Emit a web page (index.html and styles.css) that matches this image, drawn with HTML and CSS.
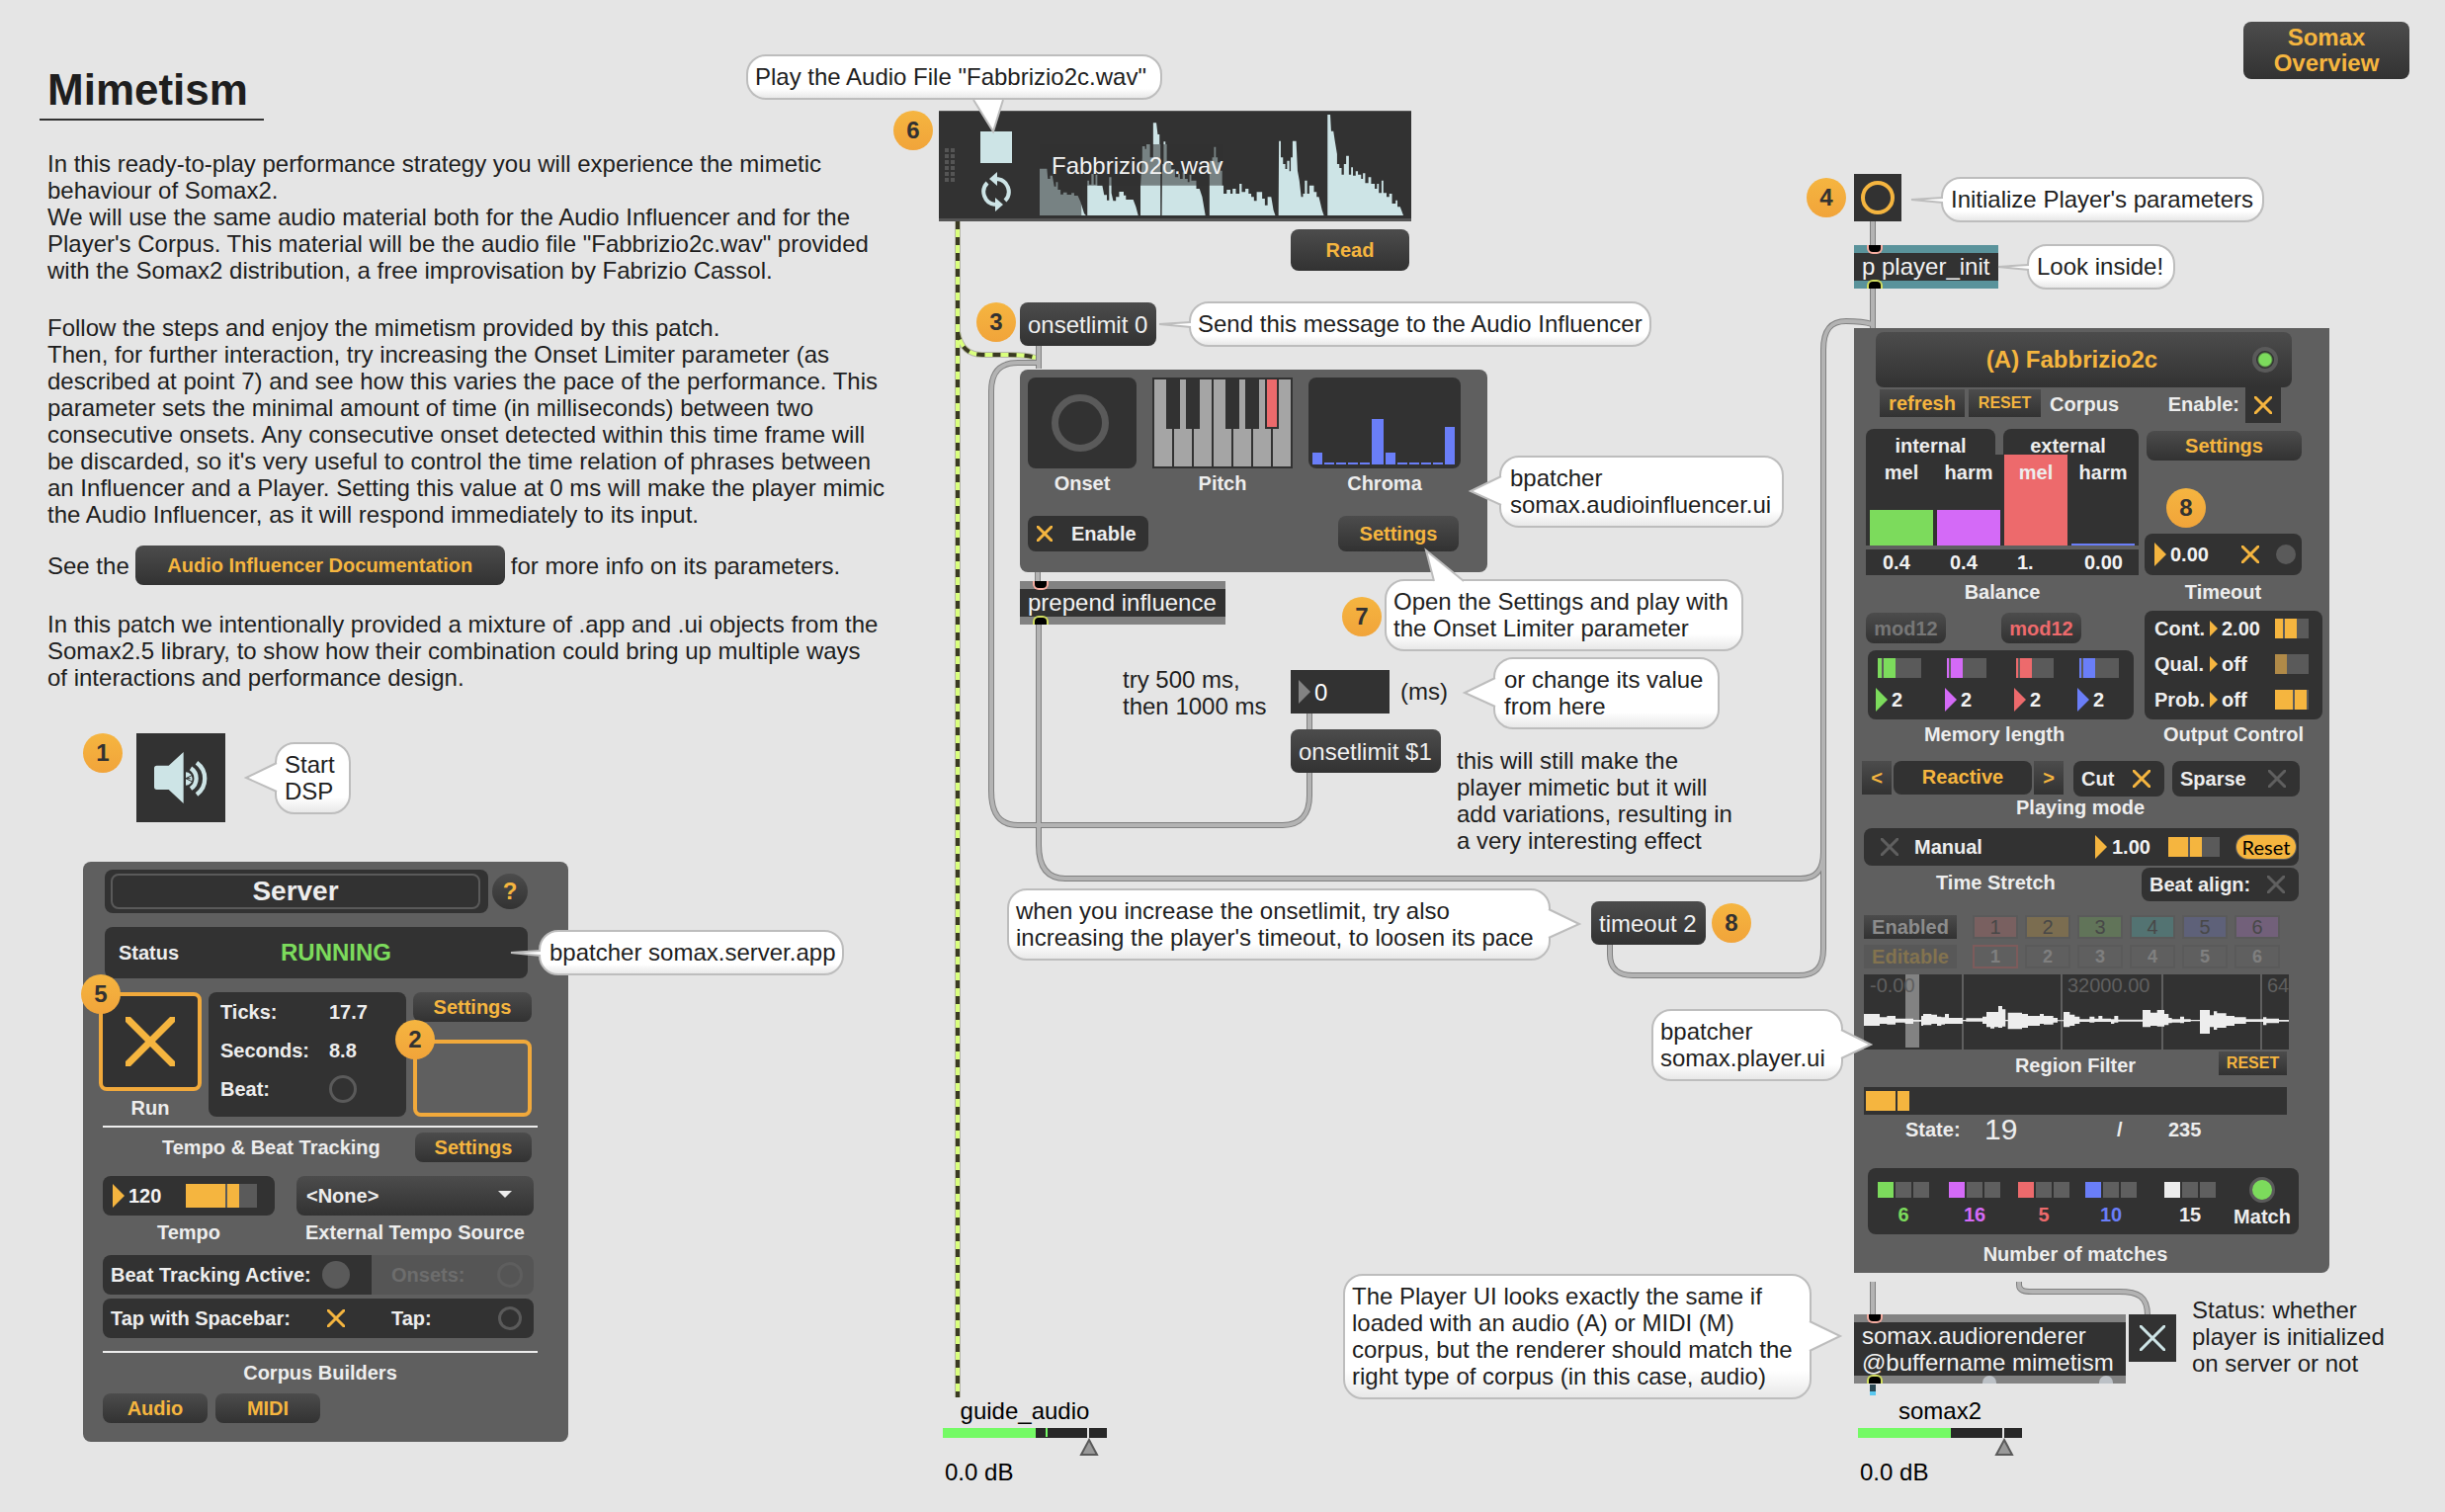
FILE: index.html
```html
<!DOCTYPE html>
<html lang="en">
<head>
<meta charset="utf-8">
<title>Mimetism</title>
<link rel="stylesheet" href="styles.css">
</head>
<body>
<main class="patch">

  <section class="intro">
    <h1>Mimetism</h1>
    <p>In this ready-to-play performance strategy you will experience the mimetic behaviour of Somax2.<br>
    We will use the same audio material both for the Audio Influencer and for the Player's Corpus. This material will be the audio file "Fabbrizio2c.wav" provided with the Somax2 distribution, a free improvisation by Fabrizio Cassol.</p>
    <p>Follow the steps and enjoy the mimetism provided by this patch.<br>
    Then, for further interaction, try increasing the Onset Limiter parameter (as described at point 7) and see how this varies the pace of the performance. This parameter sets the minimal amount of time (in milliseconds) between two consecutive onsets. Any consecutive onset detected within this time frame will be discarded, so it's very useful to control the time relation of phrases between an Influencer and a Player. Setting this value at 0 ms will make the player mimic the Audio Influencer, as it will respond immediately to its input.</p>
    <div class="see">See the <button class="btn doc">Audio Influencer Documentation</button> for more info on its parameters.</div>
    <p>In this patch we intentionally provided a mixture of .app and .ui objects from the Somax2.5 library, to show how their combination could bring up multiple ways<br>of interactions and performance design.</p>
  </section>

  <button class="node btn overview">Somax<br>Overview</button>

  <!-- patch cords -->
  <svg class="cords" aria-hidden="true">
    <defs>
      <path id="wires" d="M1051 350V373 M1051 367H1030C1012 367 1003 376 1003 396V800C1003 824 1012 835 1030 835H1298C1316 835 1325 824 1325 805V782 M1325 722V738 M1050 579V589 M1051 632V855C1051 878 1060 889 1078 889H1822C1838 889 1845 880 1845 862V354C1845 334 1852 325 1868 325C1880 325 1888 326 1894 328 M1629 956V966C1629 980 1638 987 1652 987H1820C1838 987 1845 978 1845 960V850 M1895 224V249 M1895 292V333 M1895 1297V1331 M2043 1297V1300C2043 1306 2048 1307 2056 1307H2144C2164 1307 2173 1312 2173 1331"/>
      <path id="signal" d="M969 224V1414 M969 336C972 352 980 359 994 359H1020C1034 359 1042 360 1048 362"/>
    </defs>
    <use href="#signal" class="signal-edge"/>
    <use href="#signal" class="signal-core"/>
    <use href="#signal" class="signal-dash"/>
    <use href="#wires" class="wire-edge"/>
    <use href="#wires" class="wire-core"/>
    <path d="M1895 1401V1408" stroke="#2c4954" stroke-width="6"/>
    <path d="M1895 1408V1412" stroke="#5ac8f0" stroke-width="6"/>
  </svg>

  <!-- DSP -->
  <button class="node dsp" aria-label="Start DSP">
    <svg viewBox="0 0 270 270" width="90" height="90">
      <g fill="#cde4e6"><path d="M62 98H98L143 57V213L98 171H62Q54 171 54 163V106Q54 98 62 98Z"/><path d="M150 118A20 20 0 0 1 150 158Z"/></g>
      <g fill="none" stroke="#cde4e6" stroke-width="13"><path d="M165 106A37 37 0 0 1 165 168" /><path d="M183 89A60 60 0 0 1 183 186"/></g>
      <path d="M150 137L168 128M150 137L168 146M150 137H164" stroke="#323232" stroke-width="3"/>
    </svg>
  </button>
  <div class="node bubble b-dsp">Start<br>DSP<svg class="tail"><path d="M2 21L-29 36L2 50"/></svg></div>

  <!-- server -->
  <section class="node panel server">
    <div class="srv-head"><div class="srv-title"><h2>Server</h2></div><button class="btn help">?</button></div>
    <div class="dark srv-status"><span>Status</span><strong>RUNNING</strong></div>
    <div class="srv-run">
      <label class="run"><span class="run-frame"><input type="checkbox" class="x run-x" checked></span>Run</label>
      <dl class="dark info"><dt>Ticks:</dt><dd>17.7</dd><dt>Seconds:</dt><dd>8.8</dd><dt>Beat:</dt><dd><i class="ring r28"></i></dd></dl>
      <div class="srv-side"><button class="btn">Settings</button><div class="slot"></div></div>
    </div>
    <hr>
    <div class="srv-tempo-head"><span>Tempo &amp; Beat Tracking</span><button class="btn">Settings</button></div>
    <div class="srv-tempo">
      <div class="dark tempo"><i class="tri"></i><input class="num" id="tempo" value="120"><input type="range" class="slider tempo-slider" aria-label="Tempo slider" min="0" max="60" value="42" style="--fill:40px"></div>
      <div class="pick"><select id="source"><option>&lt;None&gt;</option></select></div>
      <label for="tempo">Tempo</label><label for="source">External Tempo Source</label>
    </div>
    <div class="beat-row beat-on"><span>Beat Tracking Active:</span><i class="dot r28"></i><span class="second">Onsets:</span><i class="ring r26"></i></div>
    <div class="beat-row"><label for="tapspace">Tap with Spacebar:</label><input type="checkbox" class="x" id="tapspace" checked><span class="second">Tap:</span><button class="ring r24" aria-label="Tap"></button></div>
    <hr class="hr2">
    <h3>Corpus Builders</h3>
    <div class="builders"><button class="btn">Audio</button><button class="btn">MIDI</button></div>
  </section>
  <div class="node bubble b-server">bpatcher somax.server.app<svg class="tail"><path d="M2 21L-28 23L2 26"/></svg></div>

  <!-- audio file player -->
  <section class="node playlist">
    <div class="grip"><i></i><i></i><i></i><i></i><i></i><i></i><i></i><i></i><i></i><i></i><i></i><i></i></div>
    <div class="transport">
      <button class="stop" aria-label="Stop"></button>
      <button class="loop" aria-label="Loop"><svg width="32" height="40" viewBox="0 0 32 40"><g fill="none" stroke="#cde4e6" stroke-width="4"><path d="M17 7A13 13 0 0 1 25 29"/><path d="M15 33A13 13 0 0 1 7 11"/></g><path fill="#cde4e6" d="M9 7L17 0V14ZM23 33L15 26V40Z"/></svg></button>
    </div>
    <div class="clip">
      <svg viewBox="0 0 801 306" preserveAspectRatio="none">
        <path fill="#cde4e6" d="M0 306V164H16L18 195H23V185H28L32 218H36V205H40V228H46V242H52V236H60V243H70V238H76V246H84L90 265L98 300L102 306ZM105 306V200H109V212H114V180H119V212H123V182H127V215H138L142 244H148V260H153V190H158V238L162 262H168V250H175V234H185V245H190V258H206L212 280L217 306ZM222 306V220L226 130V96H232V104H235V90H243V130H250V25H257L260 60H264V90H266V306ZM269 306L270 150H273V82H277V90H280V140H286V150H290V165H298V190H305V180H309V195H315V175H320V195H326V205H330V182H334V200H345V225H352L358 250L365 306ZM374 306V140H380V130H384V98H388V130H392V145H398V170H402V215H405V240H412V228H420V240H425V225H432V240H440V210H445V235H453V225H460V240H466V250H472V262H478V235H490V255H496V275H502V250H510L515 290L519 306ZM526 306L527 80H531V130H536V150H541V165H545V140H550V172H553V130H557V80H565L568 170L572 200L576 250H580V240H584V200H589V240H594V215H604V235H610V250H615L622 290L626 306ZM634 306V0H640L642 50H647L650 78L655 120V150H660V162H665V182H670V150H675V125H681V182H686V160H690V185H696V172H701V182H708V195H712V178H717V208H724V190H730V210H738V225H743V210H747V238H753V200H757V238H764V250H770V240H776V270H784V260H788V280H794L801 306Z"/>
        <path fill="#323232" fill-opacity=".55" d="M0 90H403V215H92V306H0Z"/>
      </svg>
      <span>Fabbrizio2c.wav</span>
    </div>
  </section>
  <div class="node bubble b-play">Play the Audio File "Fabbrizio2c.wav"<svg class="tail"><path d="M230 46L250 78L260 46"/></svg></div>
  <button class="node btn read">Read</button>

  <button class="node msg m-onset0">onsetlimit 0</button>
  <div class="node bubble b-send">Send this message to the Audio Influencer<svg class="tail"><path d="M2 21L-30 23L2 26"/></svg></div>

  <!-- audio influencer -->
  <section class="node panel influencer">
    <div class="inf-views">
      <figure><div class="view dark"><i class="big-ring"></i></div><figcaption>Onset</figcaption></figure>
      <figure><svg class="keys" width="142" height="92" viewBox="0 0 142 92"><rect width="142" height="92" fill="#323232"/><path fill="#a5a5a5" d="M2 2h18v88H2zM22 2h18v88H22zM42 2h18v88H42zM62 2h18v88H62zM82 2h18v88H82zM102 2h18v88H102zM122 2h18v88H122z"/><path fill="#323232" d="M14 2h14v50H14zM34 2h14v50H34zM74 2h14v50H74zM94 2h14v50H94zM114 2h14v50H114z"/><rect x="116" y="2" width="10" height="48" fill="#ed6a6c"/></svg><figcaption>Pitch</figcaption></figure>
      <figure><div class="view dark chroma"><i style="height:12px"></i><i style="height:2px"></i><i style="height:2px"></i><i style="height:2px"></i><i style="height:2px"></i><i style="height:46px"></i><i style="height:12px"></i><i style="height:2px"></i><i style="height:2px"></i><i style="height:2px"></i><i style="height:2px"></i><i style="height:38px"></i></div><figcaption>Chroma</figcaption></figure>
    </div>
    <div class="inf-foot"><label class="dark"><input type="checkbox" class="x" checked>Enable</label><button class="btn">Settings</button></div>
  </section>
  <div class="node bubble b-inf">bpatcher<br>somax.audioinfluencer.ui<svg class="tail"><path d="M2 21L-29 36L2 50"/></svg></div>

  <div class="node object o-prepend">prepend influence</div>
  <div class="node bubble b-open">Open the Settings and play with<br>the Onset Limiter parameter<svg class="tail"><path d="M50 2L42 -29L80 2"/></svg></div>

  <p class="node comment c-try">try 500 ms,<br>then 1000 ms</p>
  <label class="node numbox"><i class="tri"></i><input value="0" aria-label="Onset limit in milliseconds"></label>
  <p class="node comment c-ms">(ms)</p>
  <div class="node bubble b-change">or change its value<br>from here<svg class="tail"><path d="M2 21L-29 36L2 50"/></svg></div>
  <button class="node msg m-onset1">onsetlimit $1</button>
  <p class="node comment c-still">this will still make the<br>player mimetic but it will<br>add variations, resulting in<br>a very interesting effect</p>
  <div class="node bubble b-when">when you increase the onsetlimit, try also<br>increasing the player's timeout, to loosen its pace<svg class="tail"><path d="M548 21L579 36L548 50"/></svg></div>
  <button class="node msg m-timeout">timeout 2</button>

  <!-- player init -->
  <button class="node bang" aria-label="Initialize"><i></i></button>
  <div class="node bubble b-init">Initialize Player's parameters<svg class="tail"><path d="M2 21L-30 23L2 26"/></svg></div>
  <div class="node object teal o-init">p player_init</div>
  <div class="node bubble b-look">Look inside!<svg class="tail"><path d="M2 21L-29 23L2 26"/></svg></div>

  <!-- player -->
  <section class="node panel player">
    <div class="pl-head"><button class="btn">(A) Fabbrizio2c</button><i class="led"></i></div>
    <div class="pl-corpus"><button class="btn flat refresh">refresh</button><button class="btn flat reset">RESET</button><span>Corpus</span><label>Enable: <span class="toggle-box"><input type="checkbox" class="x" checked></span></label></div>
    <div class="pl-main">
      <div class="pl-left">
        <div class="tabs2"><span>internal</span><span>external</span></div>
        <div class="balance">
          <div class="bars"><i class="green" style="height:36px"></i><i class="purple" style="height:36px"></i><i class="red" style="height:92px"></i><i class="blue" style="height:2px"></i></div>
          <div class="bar-names"><span>mel</span><span>harm</span><span>mel</span><span>harm</span></div>
        </div>
        <div class="values"><input value="0.4" aria-label="Internal melodic balance"><input value="0.4" aria-label="Internal harmonic balance"><input value="1." aria-label="External melodic balance"><input value="0.00" aria-label="External harmonic balance"></div>
        <h3 class="cap-balance">Balance</h3>
        <div class="mods"><button class="btn off">mod12</button><button class="btn on">mod12</button></div>
        <div class="dark memory">
          <div class="green"><input type="range" class="slider" aria-label="Memory 1" min="0" max="32" value="6" style="--fill:4px;width:44px"><span><i class="tri"></i><input class="num" value="2" aria-label="Memory 1 value"></span></div>
          <div class="purple"><input type="range" class="slider" aria-label="Memory 2" min="0" max="28" value="4" style="--fill:2px;width:40px"><span><i class="tri"></i><input class="num" value="2" aria-label="Memory 2 value"></span></div>
          <div class="red"><input type="range" class="slider" aria-label="Memory 3" min="0" max="26" value="4" style="--fill:2px;width:38px"><span><i class="tri"></i><input class="num" value="2" aria-label="Memory 3 value"></span></div>
          <div class="blue"><input type="range" class="slider" aria-label="Memory 4" min="0" max="28" value="4" style="--fill:2px;width:40px"><span><i class="tri"></i><input class="num" value="2" aria-label="Memory 4 value"></span></div>
        </div>
        <h3 class="cap-memory">Memory length</h3>
      </div>
      <div class="pl-right">
        <button class="btn">Settings</button>
        <div class="dark timeout"><i class="tri"></i><input class="num" id="timeout" value="0.00"><input type="checkbox" class="x" aria-label="Timeout on" checked><i class="dot r20"></i></div>
        <label class="cap" for="timeout">Timeout</label>
        <div class="dark output">
          <div><label for="cont">Cont.</label><i class="tri"></i><input class="num" id="cont" value="2.00"><input type="range" class="slider" aria-label="Continuity" min="0" max="22" value="10" style="--fill:8px;width:34px"></div>
          <div><label for="qual">Qual.</label><i class="tri"></i><input class="num" id="qual" value="off"><input type="range" class="slider dim" aria-label="Quality" min="0" max="22" value="0" style="--fill:0px;width:34px"></div>
          <div><label for="prob">Prob.</label><i class="tri"></i><input class="num" id="prob" value="off"><input type="range" class="slider" aria-label="Probability" min="0" max="22" value="20" style="--fill:18px;width:34px"></div>
        </div>
        <h3 class="cap-memory">Output Control</h3>
      </div>
    </div>
    <div class="mode"><button class="btn flat step-btn">&lt;</button><output>Reactive</output><button class="btn flat step-btn">&gt;</button><label class="dark cut">Cut<input type="checkbox" class="x" checked></label><label class="dark sparse">Sparse<input type="checkbox" class="x"></label></div>
    <h3 class="cap-wide cap-mode">Playing mode</h3>
    <div class="dark stretch"><label><input type="checkbox" class="x">Manual</label><i class="tri"></i><input class="num" id="stretch" value="1.00"><input type="range" class="slider" aria-label="Time stretch slider" min="0" max="40" value="22" style="--fill:20px;width:52px"><button class="pill">Reset</button></div>
    <div class="align"><label for="stretch">Time Stretch</label><label class="dark">Beat align:<input type="checkbox" class="x"></label></div>
    <div class="regions"><button class="btn flat word">Enabled</button><button class="c1">1</button><button class="c2">2</button><button class="c3">3</button><button class="c4">4</button><button class="c5">5</button><button class="c6">6</button></div>
    <div class="regions edit"><button class="word">Editable</button><button class="sel">1</button><button>2</button><button>3</button><button>4</button><button>5</button><button>6</button></div>
    <div class="wave">
      <svg viewBox="0 0 1290 228" preserveAspectRatio="none">
        <path fill="#5f5f5f" d="M297 0h6v228h-6zM597 0h6v228h-6zM903 0h6v228h-6zM1203 0h6v228h-6z"/>
        <path fill="#828282" d="M126 0H168V222H126Z"/>
        <path fill="#ededed" d="M0 120H48V156H0ZM48 130H70V150H48ZM70 126H96V152H70ZM96 134H125V146H96ZM125 134H150V150H125ZM150 138H174V143H150ZM174 126H180V156H174ZM180 120H205V154H180ZM205 122H222V150H205ZM222 128H235V156H222ZM235 130H246V152H235ZM246 120H258V150H246ZM258 132H300V150H258ZM300 138H310V142H300ZM310 133H360V143H310ZM360 128H372V150H360ZM372 114H408V160H372ZM384 114H396V164H384ZM408 96H420V162H408ZM420 106H430V158H420ZM430 138H437V142H430ZM437 116H480V166H437ZM480 120H498V162H480ZM498 126H534V156H498ZM534 120H546V150H534ZM546 126H575V152H546ZM575 132H588V146H575ZM588 139H606V142H588ZM606 114H625V160H606ZM625 122H640V156H625ZM640 128H655V150H640ZM655 136H685V144H655ZM685 128H700V146H685ZM700 134H750V144H700ZM712 126H724V144H712ZM750 136H760V150H750ZM760 126H772V146H760ZM772 137H846V143H772ZM846 108H870V160H846ZM870 116H890V156H870ZM890 108H912V158H890ZM912 120H925V154H912ZM925 132H935V148H925ZM935 136H960V146H935ZM960 128H972V148H960ZM972 136H992V144H972ZM992 138H1020V142H992ZM1020 108H1050V180H1020ZM1050 124H1062V160H1050ZM1062 112H1072V168H1062ZM1072 118H1100V162H1072ZM1100 126H1125V156H1100ZM1125 130H1160V150H1125ZM1160 136H1212V144H1160ZM1212 130H1222V154H1212ZM1222 134H1260V148H1222ZM1260 138H1290V143H1260Z"/>
      </svg>
      <span>-0.00</span><span>32000.00</span><span>64</span>
    </div>
    <div class="region-foot"><h3>Region Filter</h3><button class="btn flat">RESET</button></div>
    <div class="state-bar"><input type="range" class="slider" aria-label="State" min="0" max="412" value="32" style="--fill:30px"></div>
    <div class="state"><span>State:</span><b>19</b><span>/</span><span>235</span></div>
    <div class="dark matches">
      <div class="green"><i></i><i></i><i></i><b>6</b></div>
      <div class="purple"><i></i><i></i><i></i><b>16</b></div>
      <div class="red"><i></i><i></i><i></i><b>5</b></div>
      <div class="blue"><i></i><i></i><i></i><b>10</b></div>
      <div class="white"><i></i><i></i><i></i><b>15</b></div>
      <span class="match"><i class="led2"></i>Match</span>
    </div>
    <h3 class="cap-wide cap-number">Number of matches</h3>
  </section>
  <div class="node bubble b-player">bpatcher<br>somax.player.ui<svg class="tail"><path d="M192 21L222 36L192 50"/></svg></div>

  <!-- renderer -->
  <div class="node bubble b-render">The Player UI looks exactly the same if<br>loaded with an audio (A) or MIDI (M)<br>corpus, but the renderer should match the<br>right type of corpus (in this case, audio)<svg class="tail"><path d="M472 48L503 63L472 78"/></svg></div>
  <div class="node object o-render">somax.audiorenderer<br>@buffername mimetism<i class="outlet2"></i><i class="outlet3"></i></div>
  <label class="node status-toggle"><input type="checkbox" class="x" aria-label="Player initialized" checked></label>
  <p class="node comment c-status">Status: whether<br>player is initialized<br>on server or not</p>

  <section class="node gain g-guide"><h4>guide_audio</h4><svg width="170" height="30"><rect y="1" width="166" height="10" fill="#282828"/><rect y="1" width="94" height="10" fill="#74fa65"/><path fill="#74fa65" d="M104 1h2v9h-2z"/><path fill="#e5e5e5" d="M146 0h2v11h-2z"/><path d="M148 13L156 28H140Z" fill="#999" stroke="#5a5a5a" stroke-width="2"/></svg><span>0.0 dB</span></section>
  <section class="node gain g-somax"><h4>somax2</h4><svg width="170" height="30"><rect y="1" width="166" height="10" fill="#282828"/><rect y="1" width="94" height="10" fill="#74fa65"/><path fill="#e5e5e5" d="M146 0h2v11h-2z"/><path d="M148 13L156 28H140Z" fill="#999" stroke="#5a5a5a" stroke-width="2"/></svg><span>0.0 dB</span></section>

  <b class="node step s1">1</b><b class="node step s2">2</b><b class="node step s3">3</b><b class="node step s4">4</b><b class="node step s5">5</b><b class="node step s6">6</b><b class="node step s7">7</b><b class="node step s8">8</b><b class="node step s9">8</b>
</main>
</body>
</html>
```
FILE: styles.css
```css
* { box-sizing: border-box; }
body { margin: 0; background: #e5e5e5; color: #1e1e1e; font: 24px/27px "Liberation Sans", Arial, sans-serif; }
h1, h2, h3, h4, p, dl, dt, dd, figure { margin: 0; font-weight: inherit; font-size: inherit; }
button, input, select { margin: 0; padding: 0; border: 0; background: none; font: inherit; color: inherit; }
input { min-width: 0; }
i { display: block; flex: none; font-style: normal; }

.patch { position: relative; min-height: 100vh; overflow: hidden; }
/* every object of the patch sits freely on the canvas */
.node { position: absolute; white-space: nowrap; }

/* introduction */
.intro { width: 898px; padding: 66px 0 0 48px; }
.intro h1 { width: 227px; margin: 0 0 30px -8px; padding: 0 0 4px 8px; border-bottom: 2px solid #323232; font: bold 44px/50px "Liberation Sans", Arial, sans-serif; }
.intro p + p { margin-top: 31px; }
.see { display: flex; align-items: center; gap: 6px; margin: 18px 0 26px; }

/* buttons */
.btn { height: 30px; border-radius: 8px; background: linear-gradient(#4c4c4c, #323232); color: #f5b53f; font-weight: bold; font-size: 20px; line-height: 24px; }
.btn.flat { border-radius: 0; }
.btn.doc { width: 374px; height: 40px; }
.overview { top: 22px; right: 36px; width: 168px; height: 58px; font-size: 24px; line-height: 26px; }
.read { left: 1306px; top: 232px; width: 120px; height: 42px; }
.msg { height: 44px; padding: 0 8px; border-radius: 8px; background: linear-gradient(#4c4c4c, #323232); color: #f0f0f0; text-align: left; }
.m-onset0 { left: 1032px; top: 306px; width: 138px; }
.m-onset1 { left: 1306px; top: 738px; width: 152px; }
.m-timeout { left: 1610px; top: 912px; width: 116px; }

/* cords */
.cords { position: absolute; inset: 0; width: 100%; height: 100%; fill: none; }
.wire-edge { stroke: #808080; stroke-width: 6; }
.wire-core { stroke: #b3b3b3; stroke-width: 4; }
.signal-edge { stroke: #b5b5a8; stroke-width: 6; }
.signal-core { stroke: #d9ff7d; stroke-width: 4; }
.signal-dash { stroke: #3a3a22; stroke-width: 4; stroke-dasharray: 8 8; }

/* step numbers */
.step { width: 40px; height: 40px; border-radius: 50%; background: linear-gradient(#f5b540, #f1a43a); color: #323232; text-align: center; line-height: 40px; }
.s1 { left: 84px; top: 742px; }
.s2 { left: 400px; top: 1032px; }
.s3 { left: 988px; top: 306px; }
.s4 { left: 1828px; top: 180px; }
.s5 { left: 82px; top: 986px; }
.s6 { left: 904px; top: 112px; }
.s7 { left: 1358px; top: 604px; }
.s8 { left: 1732px; top: 914px; }
.s9 { left: 2192px; top: 494px; }

/* speech bubbles */
.bubble { padding: 7px 7px 8px; border: 2px solid #bdbdbd; border-radius: 20px; background: linear-gradient(#fff 78%, #e8e8e8); }
.tail { position: absolute; left: -2px; top: -2px; width: 1px; height: 1px; overflow: visible; fill: #fff; stroke: #bdbdbd; stroke-width: 2; }
.b-dsp { left: 278px; top: 751px; width: 77px; padding-left: 8px; }
.b-server { left: 545px; top: 941px; width: 309px; padding-left: 9px; }
.b-play { left: 755px; top: 55px; width: 421px; }
.b-send { left: 1203px; top: 305px; width: 468px; }
.b-inf { left: 1517px; top: 461px; width: 288px; padding-left: 9px; }
.b-open { left: 1401px; top: 586px; width: 363px; }
.b-change { left: 1511px; top: 665px; width: 229px; padding-left: 9px; }
.b-when { left: 1019px; top: 899px; width: 550px; }
.b-init { left: 1964px; top: 179px; width: 327px; padding-left: 8px; }
.b-look { left: 2051px; top: 247px; width: 150px; padding-left: 8px; }
.b-player { left: 1671px; top: 1021px; width: 194px; }
.b-render { left: 1359px; top: 1289px; width: 474px; }

/* comments */
.c-try { left: 1136px; top: 674px; }
.c-ms { left: 1417px; top: 686px; }
.c-still { left: 1474px; top: 756px; }
.c-status { left: 2218px; top: 1312px; }

/* object boxes */
.object { padding: 0 8px; border-top: 8px solid #828282; border-bottom: 8px solid #828282; background: #323232; color: #f2f2f2; line-height: 28px; }
.object::before, .object::after { content: ""; position: absolute; left: 13px; width: 12px; height: 7px; background: #000; border: 2px solid #f5aca0; }
.object::before { top: -8px; border-top: 0; border-radius: 0 0 6px 6px; }
.object::after { bottom: -8px; border-color: #d0dc5e; border-bottom: 0; border-radius: 6px 6px 0 0; }
.teal { border-color: #5a939b; }
.o-prepend { left: 1032px; top: 588px; width: 208px; }
.o-init { left: 1876px; top: 248px; width: 146px; }
.o-render { left: 1876px; top: 1330px; width: 275px; line-height: 27px; }
.outlet2, .outlet3 { position: absolute; bottom: -8px; left: 130px; width: 14px; height: 8px; border-radius: 7px 7px 0 0; background: #bcc1c6; }
.outlet3 { left: 248px; }

.dsp { left: 138px; top: 742px; width: 90px; height: 90px; background: #323232; }
.dsp svg { display: block; }
.bang { left: 1876px; top: 176px; width: 48px; height: 48px; background: #323232; }
.bang i { width: 34px; height: 34px; margin: auto; border: 4px solid #f5b53f; border-radius: 50%; }
.numbox { left: 1306px; top: 678px; display: flex; align-items: center; gap: 4px; width: 100px; height: 44px; padding-left: 8px; background: #323232; color: #fff; }
.numbox .tri { color: #828282; }
.numbox input { width: 70px; }
.status-toggle { left: 2154px; top: 1330px; display: grid; place-items: center; width: 48px; height: 48px; background: #323232; }

/* shared controls */
.panel { border-radius: 8px; background: #5f5f5f; color: #ededed; font-weight: bold; font-size: 20px; line-height: 24px; }
.dark { border-radius: 8px; background: #323232; }
.tri { width: 12px; height: 24px; background: currentColor; clip-path: polygon(0 0, 100% 50%, 0 100%); }
.panel .tri { color: #f5b53f; }
.x { appearance: none; display: block; flex: none; width: 18px; height: 18px; color: #5f5f5f;
  background:
    linear-gradient(45deg, transparent calc(50% - 2px), currentColor calc(50% - 1px), currentColor calc(50% + 1px), transparent calc(50% + 2px)),
    linear-gradient(-45deg, transparent calc(50% - 2px), currentColor calc(50% - 1px), currentColor calc(50% + 1px), transparent calc(50% + 2px)); }
.x:checked { color: #f5b53f; }
.status-toggle .x:checked { width: 26px; height: 26px; color: #cde4e6; }
.ring { border: 3px solid #5a5a5a; border-radius: 50%; }
.dot { border-radius: 50%; background: #5a5a5a; }
.r28 { width: 28px; height: 28px; }
.r26 { width: 26px; height: 26px; }
.r24 { width: 24px; height: 24px; }
.r20 { width: 20px; height: 20px; }
.num { color: #f2f2f2; }
.slider { appearance: none; display: block; flex: none; height: 20px; color: #f5b53f; background: linear-gradient(currentColor, currentColor) 0 0 / var(--fill) 100% no-repeat #5a5a5a; }
.slider::-webkit-slider-thumb { appearance: none; width: 12px; height: 20px; background: currentColor; }
.slider.dim { color: #b08a48; }
.green { color: #7cdb5c; }
.purple { color: #d46af7; }
.red { color: #ed6a6c; }
.blue { color: #6a7ef8; }
.white { color: #ededed; }

/* server */
.server { left: 84px; top: 872px; width: 491px; padding: 8px 30px 19px 20px; }
.srv-head { display: flex; align-items: center; gap: 4px; margin-left: 2px; }
.srv-title { width: 388px; padding: 4px 8px 4px 6px; border-radius: 8px; background: #323232; }
.srv-title h2 { height: 36px; border: 2px solid #5a5a5a; border-radius: 8px; text-align: center; font-size: 28px; line-height: 31px; }
.help { width: 36px; height: 36px; border-radius: 50%; font-size: 24px; }
.srv-status { display: grid; grid-template-columns: 164px 1fr; align-items: center; width: 428px; height: 52px; margin: 14px 0 14px 2px; padding-left: 14px; }
.srv-status strong { color: #7cdb5c; font-size: 24px; }
.srv-run { display: flex; align-items: flex-start; gap: 7px; margin-left: -4px; }
.run { width: 104px; text-align: center; }
.run-frame { display: grid; place-items: center; height: 100px; margin-bottom: 5px; border: 4px solid #f1a93b; border-radius: 8px; background: #323232; }
.run-x { width: 50px; height: 50px;
  background:
    linear-gradient(45deg, transparent calc(50% - 4px), currentColor calc(50% - 3px), currentColor calc(50% + 3px), transparent calc(50% + 4px)),
    linear-gradient(-45deg, transparent calc(50% - 4px), currentColor calc(50% - 3px), currentColor calc(50% + 3px), transparent calc(50% + 4px)); }
.info { display: grid; grid-template-columns: 110px 1fr; grid-auto-rows: 39px; align-items: center; width: 200px; height: 126px; padding-left: 12px; }
.srv-side { display: grid; gap: 18px; width: 120px; }
.slot { height: 78px; border: 4px solid #f1a93b; border-radius: 8px; }
.server hr { width: 440px; height: 2px; margin: 6px 0 5px; border: 0; background: #ededed; }
.srv-tempo-head { display: flex; align-items: center; width: 434px; padding-left: 60px; }
.srv-tempo-head .btn { width: 118px; margin-left: auto; }
.srv-tempo { display: grid; grid-template-columns: 174px 240px; gap: 5px 22px; margin: 14px 0 11px; text-align: center; }
.tempo { display: flex; align-items: center; gap: 4px; height: 40px; padding-left: 10px; }
.tempo .num { width: 54px; }
.tempo-slider { width: 72px; height: 24px; }
.tempo-slider::-webkit-slider-thumb { height: 24px; }
.pick { position: relative; }
.pick select { appearance: none; width: 100%; height: 40px; padding-left: 10px; border-radius: 8px; background: linear-gradient(#4c4c4c, #323232); }
.pick::after { content: ""; position: absolute; right: 22px; top: 15px; border: 7px solid transparent; border-top-color: #ededed; border-bottom: 0; }
.beat-row { display: grid; grid-template-columns: 200px 56px 1fr 48px; align-items: center; width: 436px; height: 40px; margin-bottom: 4px; padding-left: 8px; border-radius: 8px; background: #323232; }
.beat-row > :nth-child(even) { justify-self: center; }
.beat-on { background: linear-gradient(90deg, #323232 272px, #555 272px); }
.beat-on .second { color: #6d6d6d; }
.beat-on .ring { border-color: #5e5e5e; }
.second { padding-left: 28px; }
.server .hr2 { margin: 13px 0 8px; }
.server h3 { width: 440px; text-align: center; }
.builders { display: flex; gap: 8px; margin-top: 9px; }
.builders .btn { width: 106px; }

/* audio file player */
.playlist { left: 950px; top: 112px; display: flex; width: 478px; height: 112px; background: #323232; border-top: 1px solid #555; border-bottom: 3px solid #555; }
.grip { display: grid; grid-template-columns: 4px 4px; grid-auto-rows: 4px; gap: 2px; align-self: center; width: 36px; margin-left: 6px; }
.grip i { background: #555; }
.transport { display: grid; grid-template-rows: 32px 40px; gap: 9px; align-content: end; padding-bottom: 7px; }
.transport button { width: 32px; }
.stop { background: #cde4e6; }
.loop svg { display: block; }
.clip { position: relative; margin: 3px 0 0 28px; }
.clip svg { display: block; width: 368px; height: 102px; }
.clip span { position: absolute; left: 12px; top: 38px; color: #f2f2f2; }

/* audio influencer */
.influencer { left: 1032px; top: 374px; width: 473px; padding: 8px 8px 21px; }
.inf-views { display: grid; grid-template-columns: 110px 142px 154px; gap: 16px; text-align: center; }
.view { height: 92px; }
.keys { display: block; }
.inf-views figcaption { margin-top: 3px; }
.view.dark:not(.chroma) { display: grid; place-items: center; padding-right: 4px; }
.big-ring { width: 58px; height: 58px; border: 7px solid #5a5a5a; border-radius: 50%; }
.chroma { display: flex; align-items: flex-end; gap: 2px; padding: 0 4px 4px; }
.chroma i { width: 10px; background: #6a7ef8; }
.chroma i:nth-child(6) { width: 12px; }
.inf-foot { display: flex; justify-content: space-between; width: 436px; margin-top: 21px; }
.inf-foot > * { width: 122px; height: 36px; }
.inf-foot label { display: flex; align-items: center; gap: 19px; padding-left: 9px; }
.inf-foot .x { width: 16px; height: 16px; }

/* player */
.player { left: 1876px; top: 332px; width: 481px; padding: 4px 0 7px; border-radius: 0 0 8px 0; }
.pl-head { position: relative; width: 421px; margin-left: 22px; }
.pl-head .btn { display: block; width: 100%; height: 56px; padding-right: 24px; font-size: 24px; }
.led { position: absolute; right: 14px; top: 15px; width: 26px; height: 26px; border: 4px solid #5a5a5a; border-radius: 50%; background: radial-gradient(#7cdb5c 6px, #323232 8px); }
.pl-corpus { display: flex; gap: 4px; width: 432px; height: 36px; padding-left: 26px; line-height: 34px; }
.refresh { width: 86px; height: 28px; margin-top: 2px; }
.reset { width: 73px; height: 28px; margin: 2px 5px 0 0; font-size: 16px; }
.pl-corpus label { display: flex; gap: 6px; margin-left: auto; }
.toggle-box { display: grid; place-items: center; width: 36px; background: #323232; }
.pl-main { display: flex; gap: 6px; margin: 6px 0 15px 12px; }
.pl-left { width: 276px; }
.pl-left h3, .pl-right h3, .cap { display: block; text-align: center; }
.tabs2 { display: flex; gap: 8px; height: 26px; }
.tabs2 span { flex: 1; padding-top: 5px; border-radius: 8px 8px 0 0; background: #323232; text-align: center; }
.tabs2 span + span { padding-right: 6px; }
.balance { position: relative; height: 92px; background: #323232; }
.bars { display: flex; align-items: flex-end; gap: 4px; height: 92px; padding: 0 4px; }
.bars i { width: 64px; background: currentColor; }
.bar-names { position: absolute; left: 4px; top: 6px; display: grid; grid-template-columns: repeat(4, 68px); text-align: center; }
.bar-names span { padding-right: 4px; }
.values { display: grid; grid-template-columns: repeat(4, 68px); height: 26px; margin-top: 4px; padding-left: 17px; background: #323232; color: #f2f2f2; }
.values input { width: 58px; }
.cap-balance { margin-top: 5px; }
.mods { display: flex; gap: 56px; margin: 9px 0 7px; }
.mods .btn { width: 81px; height: 31px; }
.mods .off { color: #777; }
.mods .on { color: #ed6a6c; }
.memory { display: grid; grid-template-columns: 70px 70px 64px 1fr; width: 269px; height: 70px; margin-left: 2px; padding: 8px 0 0 10px; }
.memory .slider, .memory .tri { color: inherit; }
.memory span { display: flex; align-items: center; gap: 4px; margin: 10px 0 0 -2px; }
.memory .num { width: 40px; }
.cap-memory { margin-top: 3px; }
.pl-left .cap-memory { padding-right: 16px; }
.pl-right { width: 180px; padding-top: 2px; }
.pl-right > .btn { display: block; width: 157px; margin-left: 2px; }
.timeout { display: flex; align-items: center; gap: 4px; width: 159px; height: 42px; margin: 74px 0 5px; padding: 0 6px 0 10px; }
.timeout .num { width: 68px; }
.timeout .dot { margin-left: auto; }
.cap { width: 159px; margin-bottom: 7px; }
.output { height: 110px; }
.output > div { display: grid; grid-template-columns: 56px 12px 54px 34px; align-items: center; height: 36px; padding-left: 10px; }
.output .tri { width: 8px; height: 16px; }
.mode { display: flex; gap: 2px; height: 36px; margin-left: 8px; }
.step-btn { width: 30px; height: 34px; }
.mode output { width: 140px; height: 34px; border-radius: 8px; background: #323232; color: #f5b53f; text-align: center; line-height: 32px; }
.mode label, .align .dark { display: flex; align-items: center; justify-content: space-between; padding: 0 14px 0 8px; }
.cut { width: 92px; margin: 0 6px 0 8px; }
.sparse { width: 129px; }
.cap-wide { width: 448px; text-align: center; }
.cap-mode { padding-left: 10px; line-height: 22px; }
.stretch { display: flex; align-items: center; width: 440px; height: 38px; margin: 10px 0 2px 10px; padding: 0 3px 0 17px; }
.stretch label { display: flex; align-items: center; gap: 16px; margin-right: auto; }
.stretch .num { width: 57px; margin-left: 5px; }
.pill { width: 60px; height: 24px; margin-left: 17px; border-radius: 12px; background: #f5b53f; color: #000; font: 20px/24px Lato, sans-serif; box-shadow: 0 0 0 1px #5f5f5f; }
.align { display: flex; justify-content: space-between; width: 450px; height: 34px; padding-left: 83px; line-height: 30px; }
.align .dark { width: 159px; }
.regions { display: flex; gap: 7px; height: 24px; margin: 14px 0 0 10px; }
.regions button { width: 46px; border: 2px solid #5a5a5a; color: #484848; font-weight: normal; line-height: 20px; }
.regions .word { width: 94px; height: 24px; margin-right: 9px; border: 0; color: #8c8c8c; font-weight: bold; }
.c1 { background: #796060; }
.c2 { background: #7b6d50; }
.c3 { background: #617459; }
.c4 { background: #537372; }
.c5 { background: #5e6179; }
.c6 { background: #72607a; }
.regions.edit { margin: 6px 0 6px 10px; }
.edit button { color: #7f7f7f; font-weight: bold; font-size: 18px; }
.regions.edit .word { background: #585858; color: #83734f; font-size: 20px; }
.regions .sel { border-color: #7d5b5b; }
.wave { position: relative; width: 430px; height: 76px; margin-left: 10px; overflow: hidden; background: #323232; }
.wave svg { display: block; width: 100%; height: 100%; }
.wave span { position: absolute; left: 6px; top: -1px; color: #5f5f5f; font-weight: normal; }
.wave span:nth-of-type(2) { left: 206px; }
.wave span:nth-of-type(3) { left: 408px; }
.region-foot { display: grid; grid-template-columns: 1fr auto 1fr; width: 428px; margin: 2px 0 8px 10px; }
.region-foot h3 { grid-column: 2; line-height: 28px; }
.region-foot .btn { justify-self: end; width: 69px; height: 24px; font-size: 16px; }
.state-bar { width: 428px; height: 28px; margin-left: 10px; padding: 4px 2px; background: #323232; }
.state-bar .slider { width: 424px; background-color: #323232; }
.state { display: grid; grid-template-columns: 80px 134px 52px 1fr; height: 32px; padding-left: 52px; line-height: 30px; }
.state b { font-weight: normal; font-size: 30px; }
.matches { display: grid; grid-template-columns: 72px 70px 68px 80px 62px 1fr; width: 436px; height: 67px; margin: 22px 0 8px 14px; padding-left: 10px; }
.matches div { display: grid; grid-template-columns: repeat(3, 16px); gap: 5px 2px; align-content: start; padding-top: 14px; }
.matches div i { height: 16px; background: #5f5f5f; }
.matches div i:first-child { background: currentColor; }
.matches b { grid-column: 1 / -1; text-align: center; }
.match { padding-top: 9px; text-align: center; }
.led2 { width: 26px; height: 26px; margin: 0 auto 2px; border: 3px solid #5a5a5a; border-radius: 50%; background: #7cdb5c; }
.cap-number { line-height: 24px; }

/* gain meters */
.gain { top: 1414px; width: 170px; color: #000; }
.gain h4 { width: 166px; text-align: center; }
.gain svg { display: block; margin: 3px 0 5px; }
.gain span { display: block; margin: -3px 0 0 2px; }
.g-guide { left: 954px; }
.g-somax { left: 1880px; }
```
